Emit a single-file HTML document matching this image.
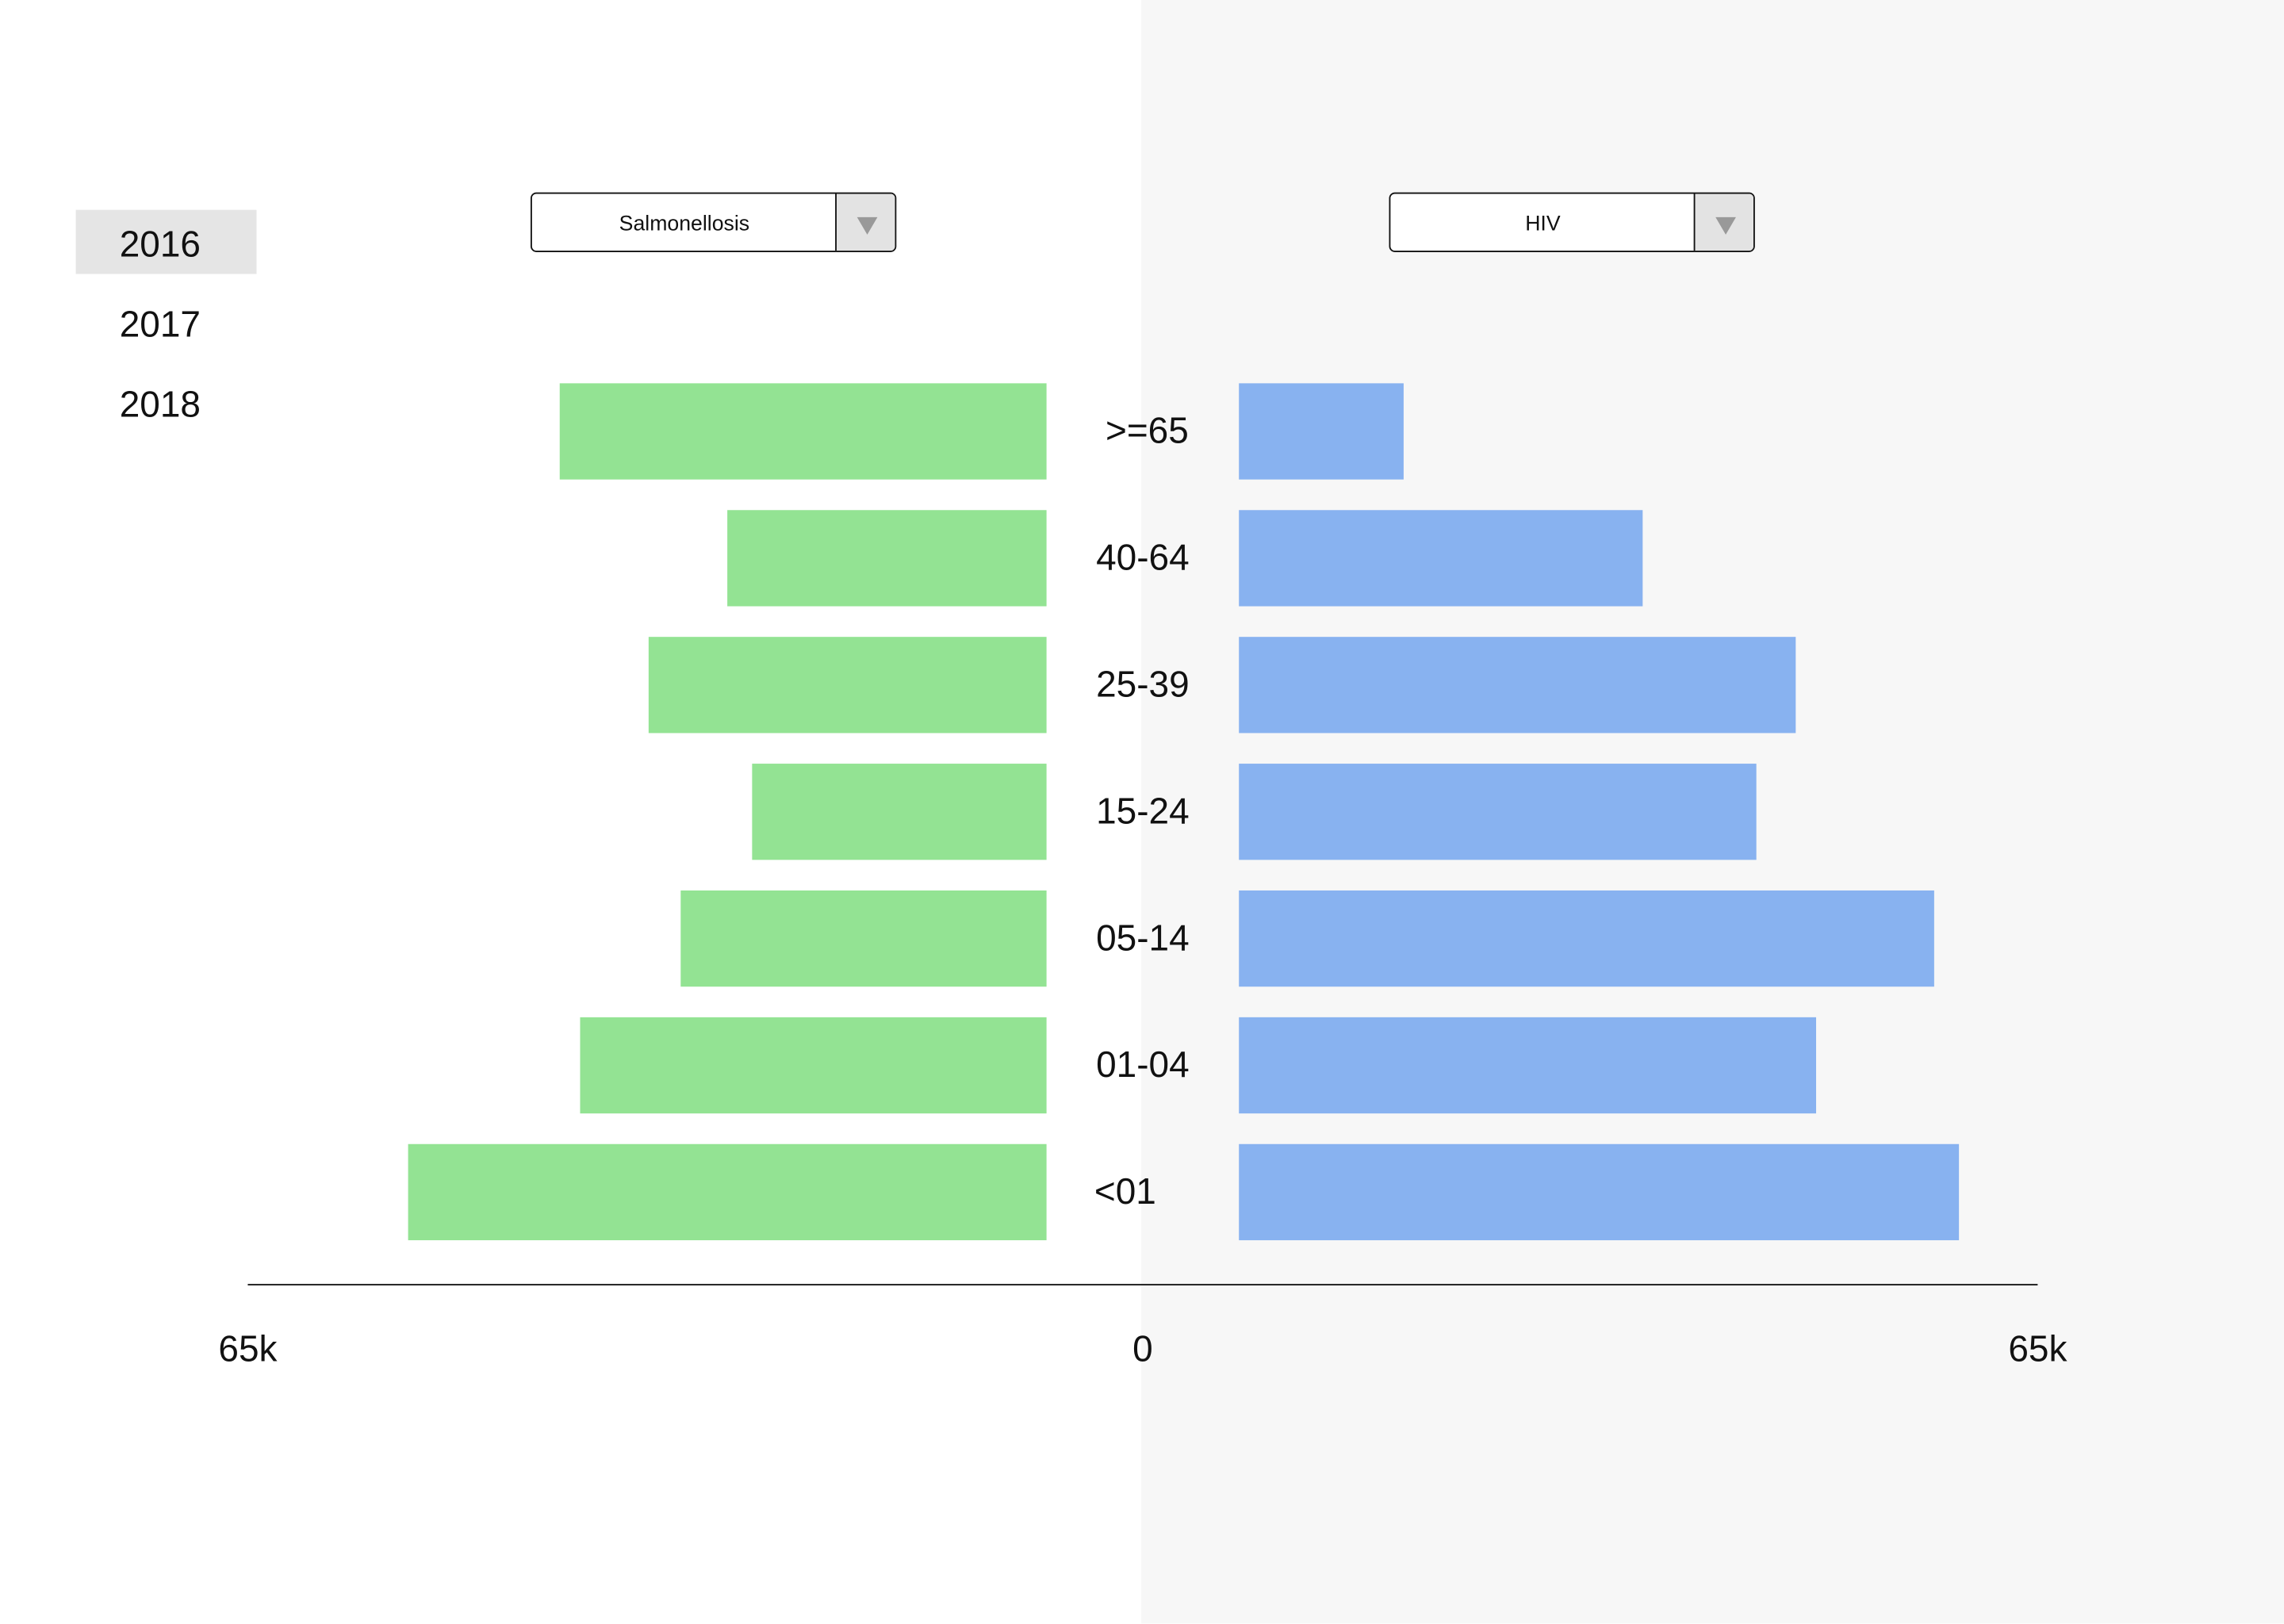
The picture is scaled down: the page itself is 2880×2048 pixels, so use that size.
<!DOCTYPE html>
<html><head><meta charset="utf-8"><style>
html,body{margin:0;padding:0;width:2880px;height:2048px;overflow:hidden;background:#fff}
#s{position:absolute;left:0;top:0;width:1567px;height:1114px;transform:scale(1.8379);transform-origin:0 0;font-family:"Liberation Sans",sans-serif;color:#111}
.a{position:absolute}
.g{background:#93e393;height:66px}
.b{background:#88b2f0;height:66px}
.lab{position:absolute;width:120px;text-align:center;font-size:25px;line-height:30px}
.yr{position:absolute;left:82px;font-size:25px;line-height:30px}
.dd{position:absolute;top:132px;width:249px;height:39px;border:1.3px solid #111;border-radius:4px;background:#fff;overflow:hidden}
.dd span{position:absolute;left:0;width:209px;top:2px;line-height:39px;text-align:center;font-size:14.5px}
.dd i{position:absolute;right:0;top:0;width:40px;height:39px;background:#e3e3e3;border-left:1.3px solid #111}
.dd i:after{content:"";position:absolute;left:14px;top:16px;border-left:7px solid transparent;border-right:7px solid transparent;border-top:12px solid #999}
</style></head><body><div id="s">
<div class="a" style="left:783px;top:0;width:784px;height:1114px;background:#f7f7f7"></div>
<div class="a" style="left:52px;top:144px;width:124px;height:44px;background:#e5e5e5"></div>
<div class="yr" style="top:153px">2016</div>
<div class="yr" style="top:208px">2017</div>
<div class="yr" style="top:263px">2018</div>
<div class="dd" style="left:364px"><span>Salmonellosis</span><i></i></div>
<div class="dd" style="left:953px"><span>HIV</span><i></i></div>

<div class="a g" style="top:263px;left:384px;width:334px"></div>
<div class="a g" style="top:350px;left:499px;width:219px"></div>
<div class="a g" style="top:437px;left:445px;width:273px"></div>
<div class="a g" style="top:524px;left:516px;width:202px"></div>
<div class="a g" style="top:611px;left:467px;width:251px"></div>
<div class="a g" style="top:698px;left:398px;width:320px"></div>
<div class="a g" style="top:785px;left:280px;width:438px"></div>

<div class="a b" style="top:263px;left:850px;width:113px"></div>
<div class="a b" style="top:350px;left:850px;width:277px"></div>
<div class="a b" style="top:437px;left:850px;width:382px"></div>
<div class="a b" style="top:524px;left:850px;width:355px"></div>
<div class="a b" style="top:611px;left:850px;width:477px"></div>
<div class="a b" style="top:698px;left:850px;width:396px"></div>
<div class="a b" style="top:785px;left:850px;width:494px"></div>

<div class="lab" style="left:727px;top:281px">&gt;=65</div>
<div class="lab" style="left:724px;top:368px">40-64</div>
<div class="lab" style="left:724px;top:455px">25-39</div>
<div class="lab" style="left:724px;top:542px">15-24</div>
<div class="lab" style="left:724px;top:629px">05-14</div>
<div class="lab" style="left:724px;top:716px">01-04</div>
<div class="lab" style="left:712px;top:803px">&lt;01</div>

<div class="a" style="left:170px;top:881px;width:1228px;height:1.3px;background:#111"></div>
<div class="lab" style="left:110px;top:911px">65k</div>
<div class="lab" style="left:724px;top:911px">0</div>
<div class="lab" style="left:1338px;top:911px">65k</div>
</div></body></html>
